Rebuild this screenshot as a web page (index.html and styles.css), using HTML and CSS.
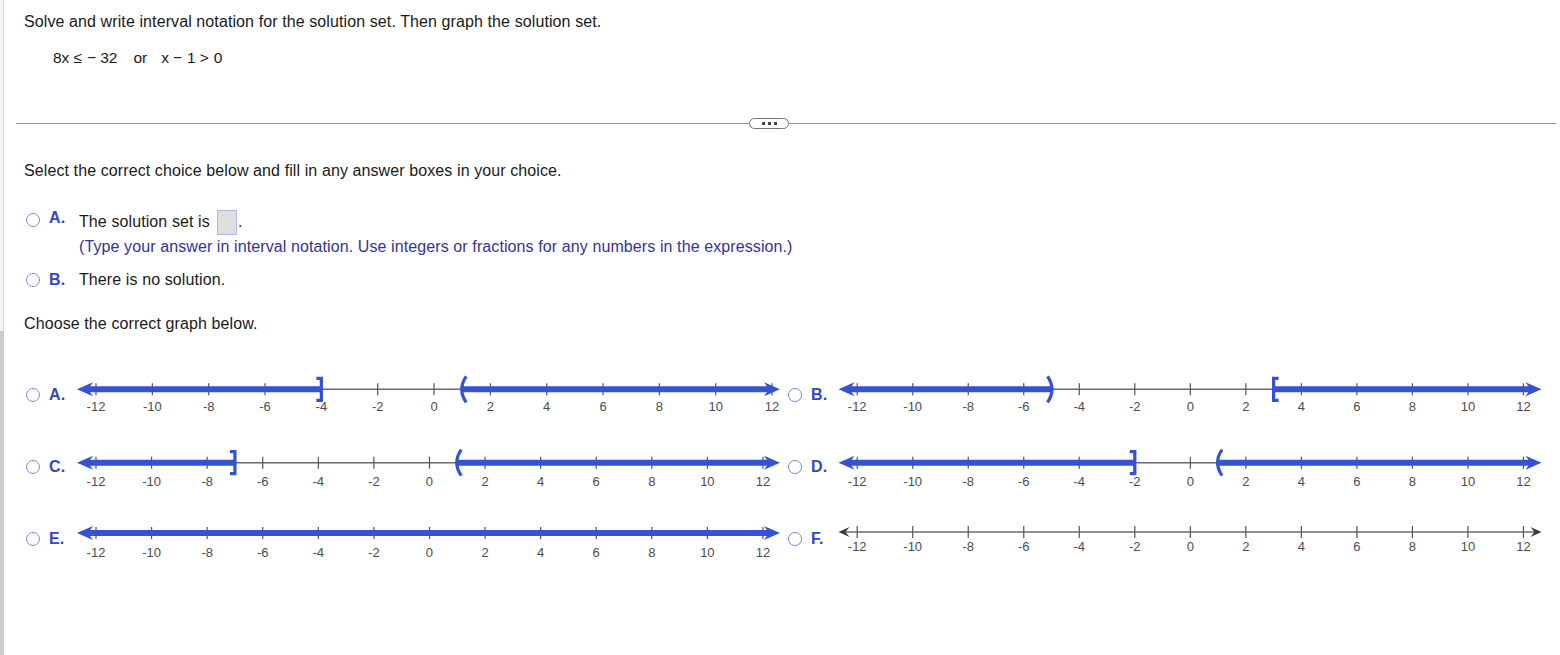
FILE: index.html
```html
<!DOCTYPE html>
<html lang="en">
<head>
<meta charset="utf-8">
<title>Interval notation</title>
<link rel="stylesheet" href="styles.css">
</head>
<body>
<div class="page">
  <div class="rail"><div class="rail-top"></div><div class="rail-bottom"></div></div>
  <main class="content">
    <p class="q">Solve and write interval notation for the solution set. Then graph the solution set.</p>
    <p class="eq"><span>8x</span><span class="op">≤</span><span>− 32</span><span class="or">or</span><span>x</span><span class="op">−</span><span>1</span><span class="op">&gt;</span><span>0</span></p>
    <div class="divider"><span class="rule rule-left"></span><span class="pill"><i></i><i></i><i></i></span><span class="rule"></span></div>
    <p class="instr">Select the correct choice below and fill in any answer boxes in your choice.</p>

    <div class="choice choice-a">
      <span class="radio"></span><span class="letter">A.</span>
      <div class="choice-body">
        <div class="ans-line">The solution set is <span class="box"></span>.</div>
        <div class="hint">(Type your answer in interval notation. Use integers or fractions for any numbers in the expression.)</div>
      </div>
    </div>
    <div class="choice choice-b">
      <span class="radio"></span><span class="letter">B.</span>
      <div class="choice-body">There is no solution.</div>
    </div>

    <p class="instr2">Choose the correct graph below.</p>

    <div class="graphs">
      <div class="gcell"><span class="radio"></span><span class="gletter">A.</span>
        <svg class="nl" width="712" height="44" data-x0="26" data-step="28.17" data-tl="7" data-tr="710" data-ay="14.3" data-ly="35.5" data-segs='[["L",-4,"]"],["R",1,"("]]'></svg></div>
      <div class="gcell"><span class="radio"></span><span class="gletter">B.</span>
        <svg class="nl" width="712" height="44" data-x0="25.2" data-step="27.76" data-tl="6.5" data-tr="709.5" data-ay="14.3" data-ly="35.5" data-segs='[["L",-5,")"],["R",3,"["]]'></svg></div>
      <div class="gcell"><span class="radio"></span><span class="gletter">C.</span>
        <svg class="nl" width="712" height="44" data-x0="26" data-step="27.79" data-tl="7" data-tr="710" data-ay="15.7" data-ly="38.5" data-segs='[["L",-7,"]"],["R",1,"("]]'></svg></div>
      <div class="gcell"><span class="radio"></span><span class="gletter">D.</span>
        <svg class="nl" width="712" height="44" data-x0="25.2" data-step="27.76" data-tl="6.5" data-tr="709.5" data-ay="15.7" data-ly="38.5" data-segs='[["L",-2,"]"],["R",1,"("]]'></svg></div>
      <div class="gcell"><span class="radio"></span><span class="gletter">E.</span>
        <svg class="nl" width="712" height="44" data-x0="26" data-step="27.79" data-tl="7" data-tr="710" data-ay="14" data-ly="37.5" data-segs='[["A"]]'></svg></div>
      <div class="gcell"><span class="radio"></span><span class="gletter">F.</span>
        <svg class="nl" width="712" height="44" data-x0="25.2" data-step="27.76" data-tl="6.5" data-tr="709.5" data-ay="13" data-ly="32" data-segs='[]'></svg></div>
    </div>
  </main>
</div>
<script src="script.js"></script>
</body>
</html>
```

FILE: styles.css
```css
html, body {
  margin: 0;
  padding: 0;
  background: #ffffff;
}
body {
  font-family: Arial, "Liberation Sans", sans-serif;
  font-size: 16px;
  color: #1a1a1a;
  letter-spacing: 0.1px;
}
.page {
  display: flex;
  min-height: 655px;
}
.rail {
  width: 4px;
  display: flex;
  flex-direction: column;
  flex: none;
}
.rail-top {
  height: 331px;
  background: #f4f4f6;
  border-right: 1px solid #d9d9e4;
  box-sizing: border-box;
}
.rail-bottom {
  flex: 1;
  background: #cccccc;
}
.content {
  flex: 1;
  padding: 12px 4px 0 20px;
}
p { margin: 0; }
.q {
  line-height: 20px;
}
.eq {
  margin: 16px 0 0 29px;
  line-height: 20px;
  display: flex;
  font-size: 15.5px;
  letter-spacing: 0;
}
.eq .op { margin: 0 5px 0 4px; }
.eq .or { margin: 0 14px 0 16px; }
.divider {
  margin: 49px 0 0 -8px;
  height: 13px;
  display: flex;
  align-items: center;
}
.rule {
  flex: 1;
  height: 1px;
  background: #8a94a0;
}
.rule-left {
  flex: none;
  width: 733px;
}
.pill {
  width: 40px;
  height: 11px;
  box-sizing: border-box;
  border: 1px solid #6b7682;
  border-radius: 6px;
  display: flex;
  align-items: center;
  justify-content: center;
  gap: 3px;
}
.pill i {
  width: 3px;
  height: 3px;
  background: #3c4650;
  display: block;
}
.instr {
  margin-top: 31px;
  line-height: 20px;
}
.choice {
  display: flex;
  align-items: flex-start;
  padding-left: 2px;
}
.choice-a { margin-top: 28px; }
.choice-b { margin-top: 13px; line-height: 20px; }
.radio {
  width: 14px;
  height: 14px;
  box-sizing: border-box;
  border: 1.8px solid #7689dc;
  border-radius: 50%;
  flex: none;
  background: #fff;
}
.choice-a .radio { margin-top: 3.5px; }
.choice-b .radio { margin-top: 3px; }
.letter {
  width: 30px;
  margin-left: 9px;
  font-weight: bold;
  color: #3347c2;
  line-height: 20px;
  flex: none;
}
.choice-a .letter { margin-top: -1px; }
.ans-line {
  height: 26px;
  display: flex;
  align-items: center;
  white-space: pre;
}
.box {
  display: inline-block;
  width: 20px;
  height: 25px;
  box-sizing: border-box;
  background: #dedede;
  border: 1px solid #a9bbe6;
  margin: 0 1px 0 2.5px;
}
.hint {
  margin-top: 2px;
  line-height: 20px;
  color: #333399;
}
.instr2 {
  margin-top: 24px;
  line-height: 20px;
}
.graphs {
  margin-top: 41px;
  margin-left: 2px;
  display: grid;
  grid-template-columns: 762px 1fr;
  grid-auto-rows: 72px;
}
.gcell {
  display: flex;
  align-items: flex-start;
}
.gcell .radio { margin-top: 13px; }
.gletter {
  width: 21px;
  margin-left: 9px;
  margin-top: 10px;
  line-height: 20px;
  font-weight: bold;
  color: #3347c2;
  flex: none;
}
.nl {
  display: block;
  flex: none;
  overflow: visible;
}
.nl text {
  font-family: Arial, "Liberation Sans", sans-serif;
  font-size: 13px;
  fill: #4d4d4d;
  letter-spacing: 0;
}
```

FILE: script.js
```js
(function () {
  var NS = 'http://www.w3.org/2000/svg';
  var BLUE = '#3452d1';
  function el(name, attrs, parent) {
    var e = document.createElementNS(NS, name);
    for (var k in attrs) e.setAttribute(k, attrs[k]);
    parent.appendChild(e);
    return e;
  }
  document.querySelectorAll('svg.nl').forEach(function (svg) {
    var d = svg.dataset;
    var x0 = +d.x0, step = +d.step, tl = +d.tl, tr = +d.tr, ay = +d.ay, ly = +d.ly;
    var segs = JSON.parse(d.segs);
    var X = function (v) { return x0 + (v + 12) * step; };

    el('line', { x1: tl + 2, y1: ay, x2: tr - 2, y2: ay, stroke: '#6b6b6b', 'stroke-width': 1.6 }, svg);
    for (var v = -12; v <= 12; v += 2) {
      var x = X(v);
      el('line', { x1: x, y1: ay - 6, x2: x, y2: ay + 6, stroke: '#555', 'stroke-width': 1.2 }, svg);
      var t = el('text', { x: x, y: ly, 'text-anchor': 'middle' }, svg);
      t.textContent = String(v);
    }

    function arrowL(fill, big) {
      var w = big ? 16 : 11, h = big ? 7 : 5, n = big ? 11 : 7;
      el('polygon', { points: tl + ',' + ay + ' ' + (tl + w) + ',' + (ay - h) + ' ' + (tl + n) + ',' + ay + ' ' + (tl + w) + ',' + (ay + h), fill: fill }, svg);
    }
    function arrowR(fill, big) {
      var w = big ? 16 : 11, h = big ? 7 : 5, n = big ? 11 : 7;
      el('polygon', { points: tr + ',' + ay + ' ' + (tr - w) + ',' + (ay - h) + ' ' + (tr - n) + ',' + ay + ' ' + (tr - w) + ',' + (ay + h), fill: fill }, svg);
    }
    function end(v, kind) {
      var x = X(v), p;
      if (kind === ']') p = 'M' + (x - 5) + ',' + (ay - 11) + ' H' + x + ' V' + (ay + 11) + ' H' + (x - 5);
      if (kind === '[') p = 'M' + (x + 5) + ',' + (ay - 11) + ' H' + x + ' V' + (ay + 11) + ' H' + (x + 5);
      if (kind === '(') p = 'M' + (x + 4) + ',' + (ay - 13) + ' Q' + (x - 5) + ',' + ay + ' ' + (x + 4) + ',' + (ay + 13);
      if (kind === ')') p = 'M' + (x - 4) + ',' + (ay - 13) + ' Q' + (x + 5) + ',' + ay + ' ' + (x - 4) + ',' + (ay + 13);
      el('path', { d: p, fill: 'none', stroke: BLUE, 'stroke-width': 3.2 }, svg);
    }

    if (segs.length === 0) {
      arrowL('#3a3a3a', false);
      arrowR('#3a3a3a', false);
      return;
    }
    segs.forEach(function (s) {
      if (s[0] === 'L') {
        el('line', { x1: tl + 8, y1: ay, x2: X(s[1]), y2: ay, stroke: BLUE, 'stroke-width': 6 }, svg);
        arrowL(BLUE, true);
        end(s[1], s[2]);
      } else if (s[0] === 'R') {
        el('line', { x1: X(s[1]), y1: ay, x2: tr - 8, y2: ay, stroke: BLUE, 'stroke-width': 6 }, svg);
        arrowR(BLUE, true);
        end(s[1], s[2]);
      } else {
        el('line', { x1: tl + 8, y1: ay, x2: tr - 8, y2: ay, stroke: BLUE, 'stroke-width': 6 }, svg);
        arrowL(BLUE, true);
        arrowR(BLUE, true);
      }
    });
  });
})();
```
